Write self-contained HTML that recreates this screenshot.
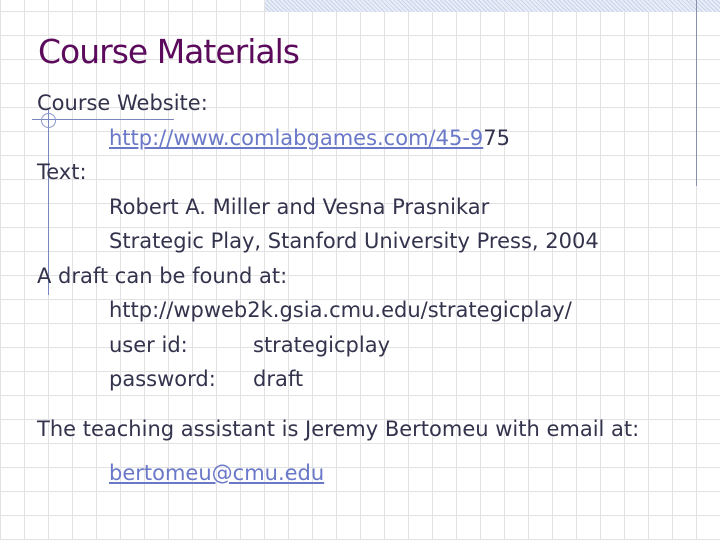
<!DOCTYPE html><html><head><style>
body{margin:0;width:720px;height:540px;overflow:hidden;position:relative;background:#fff;
background-image:repeating-linear-gradient(90deg,#e2e2e2 0 1px,transparent 1px 24px),repeating-linear-gradient(0deg,#e2e2e2 0 1px,transparent 1px 24px);
font-family:"DejaVu Sans",Verdana,sans-serif;color:#33334d}
.t{position:absolute;white-space:nowrap;font-size:21px;line-height:24px}
a{color:#6a78c8;text-decoration:underline}
</style></head><body>
<div style="position:absolute;left:265px;top:0;width:455px;height:12px;background:repeating-linear-gradient(45deg,#c9d4ea 0 1px,#e8edf7 1px 3px)"></div>
<div style="position:absolute;left:696px;top:0;width:1px;height:186px;background:#8890aa"></div>
<div style="position:absolute;left:32px;top:119px;width:142px;height:1px;background:#7a86c0"></div>
<div style="position:absolute;left:48px;top:110px;width:1px;height:185px;background:#7a86c0"></div>
<div style="position:absolute;left:41px;top:113px;width:13px;height:13px;border:1px solid #8a96cc;border-radius:50%"></div>
<div class="t" style="left:38px;top:32px;font-size:33px;line-height:40px;color:#5c0a5c;letter-spacing:-1px">Course Materials</div>
<div class="t" style="left:37px;top:91px">Course Website:</div>
<div class="t" style="left:109px;top:126px"><a>http://www.comlabgames.com/45-9</a>75</div>
<div class="t" style="left:37px;top:160px">Text:</div>
<div class="t" style="left:109px;top:195px">Robert A. Miller and Vesna Prasnikar</div>
<div class="t" style="left:109px;top:229px">Strategic Play, Stanford University Press, 2004</div>
<div class="t" style="left:37px;top:264px">A draft can be found at:</div>
<div class="t" style="left:109px;top:298px">http://wpweb2k.gsia.cmu.edu/strategicplay/</div>
<div class="t" style="left:109px;top:333px">user id:</div>
<div class="t" style="left:253px;top:333px">strategicplay</div>
<div class="t" style="left:109px;top:367px">password:</div>
<div class="t" style="left:253px;top:367px">draft</div>
<div class="t" style="left:37px;top:417px">The teaching assistant is Jeremy Bertomeu with email at:</div>
<div class="t" style="left:109px;top:461px"><a>bertomeu@cmu.edu</a></div>
</body></html>
